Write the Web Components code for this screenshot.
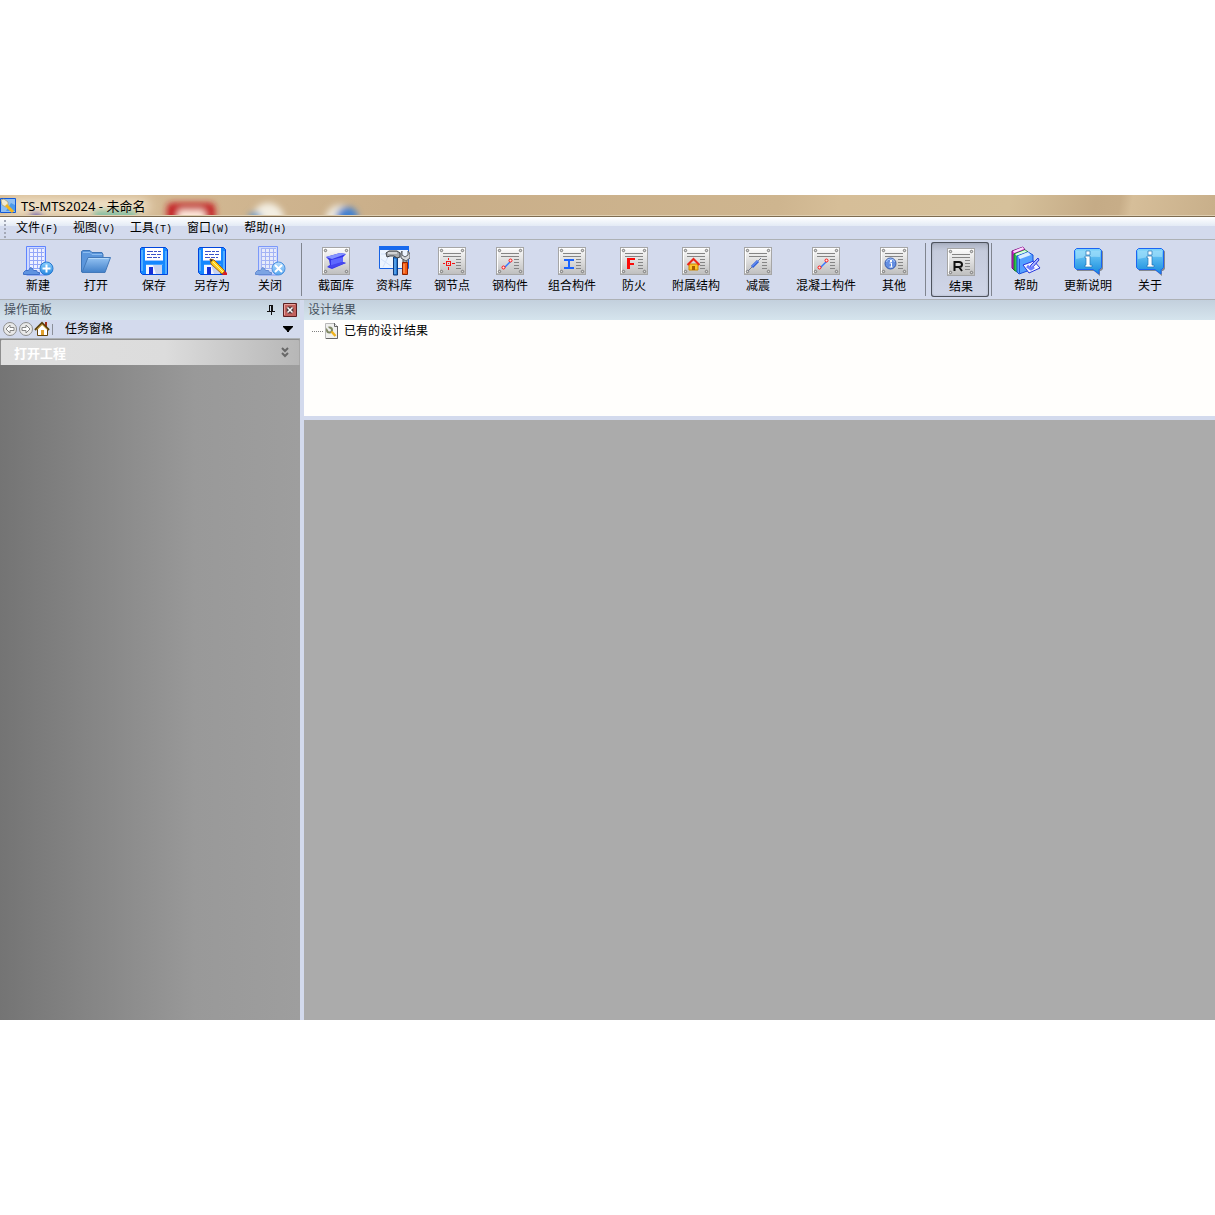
<!DOCTYPE html>
<html lang="zh-CN">
<head>
<meta charset="utf-8">
<title>TS-MTS2024 - 未命名</title>
<style>
  body {
    margin: 0;
    min-height: 100vh;
    box-sizing: border-box;
    padding: 195px 0;
    display: flex;
    flex-direction: column;
    background: #fff;
    font: 12px/16px "Noto Sans CJK SC", "Liberation Sans", sans-serif;
    color: #000;
    --face: #d3daed;
    --edge: #adb1b5;
  }
</style>
</head>
<body>
<mts-window>
  <mts-title slot="title">TS-MTS2024 - 未命名</mts-title>
  <mts-menubar slot="menu">
    <mts-menu key="F">文件</mts-menu>
    <mts-menu key="V">视图</mts-menu>
    <mts-menu key="T">工具</mts-menu>
    <mts-menu key="W">窗口</mts-menu>
    <mts-menu key="H">帮助</mts-menu>
  </mts-menubar>
  <mts-toolbar slot="tools">
    <mts-tool icon="new">新建</mts-tool>
    <mts-tool icon="open">打开</mts-tool>
    <mts-tool icon="save">保存</mts-tool>
    <mts-tool icon="saveas">另存为</mts-tool>
    <mts-tool icon="close">关闭</mts-tool>
    <mts-separator></mts-separator>
    <mts-tool icon="section">截面库</mts-tool>
    <mts-tool icon="data">资料库</mts-tool>
    <mts-tool icon="node">钢节点</mts-tool>
    <mts-tool icon="member">钢构件</mts-tool>
    <mts-tool icon="composite">组合构件</mts-tool>
    <mts-tool icon="fire">防火</mts-tool>
    <mts-tool icon="house">附属结构</mts-tool>
    <mts-tool icon="damper">减震</mts-tool>
    <mts-tool icon="concrete">混凝土构件</mts-tool>
    <mts-tool icon="other">其他</mts-tool>
    <mts-separator></mts-separator>
    <mts-tool icon="result" pressed>结果</mts-tool>
    <mts-separator></mts-separator>
    <mts-tool icon="books">帮助</mts-tool>
    <mts-tool icon="info">更新说明</mts-tool>
    <mts-tool icon="info">关于</mts-tool>
  </mts-toolbar>
  <mts-taskpane slot="side" caption="操作面板" heading="任务窗格">
    <mts-taskgroup>打开工程</mts-taskgroup>
  </mts-taskpane>
  <mts-results slot="main" caption="设计结果">
    <mts-treeitem>已有的设计结果</mts-treeitem>
  </mts-results>
</mts-window>

<script>
const building = `
  <path d="M4.500 1.500h19V30h-19z" fill="#cfdaff" stroke="#5f84ff"/>
  <path d="M7 3h15v22H7z" fill="#eef1ff"/>
  <path d="M7 3.500h15M7 7.500h15M7 11.500h15M7 15.500h15M7 19.500h15M7 23.500h15M7.500 3v21M11.500 3v21M15.500 3v21M19.500 3v21" stroke="#94a7f8" shape-rendering="crispEdges"/>
  <path d="M1.500 29.500v-2l2-2h3l2-3 2 1 1 2h3l1 2h2v2z" fill="#5f93e0" stroke="#3e70c8"/>`;

const gradient = (a, b) => `<defs><linearGradient id="g" x1="0" y1="0" x2="0" y2="1"><stop offset="0" stop-color="${a}"/><stop offset="1" stop-color="${b}"/></linearGradient></defs>`;

const blank = gradient('#fdfdfd', '#bebebe') + `
  <rect x="2.500" y="2.500" width="27" height="27" fill="url(#g)" stroke="#a6a6a6"/>
  <path d="M3.500 28V3.500H28" fill="none" stroke="#fff"/>
  <g fill="#ddd" stroke="#777"><circle cx="5.500" cy="5.500" r="1.200"/><circle cx="26.500" cy="5.500" r="1.200"/><circle cx="5.500" cy="26.500" r="1.200"/><circle cx="26.500" cy="26.500" r="1.200"/></g>`;

const plate = art => blank + `
  <path d="M7 8.500h18M7 11.500h18M20 14.500h5M20 17.500h5M20 20.500h5M20 23.500h5" stroke="#858585" shape-rendering="crispEdges"/>` + art;

const disk = `
  <path d="M2.500 3.500l1-1h24l2 2v25h-25l-2-2z" fill="#1587ff" stroke="#0044dc"/>
  <path d="M4 5v21M28 6v23" stroke="#66bcff" stroke-width="1.500"/>
  <path d="M7 3h18v13H7z" fill="#fff"/><path d="M7 15.500h18" stroke="#9cc4ff"/>
  <path d="M9 6.500h6m1 0h3m1 0h3M9 9.500h3m1 0h5m1 0h4M9 12.500h5m1 0h4m1 0h2" stroke="#3c52c8" shape-rendering="crispEdges"/>
  <path d="M8 20h16v9H8z" fill="#f4f7ff"/><path d="M15 20h9v9h-6z" fill="#c7d2ef"/>
  <path d="M11 22h4v7h-4z" fill="#1630d8"/><path d="M8 19.500h17" stroke="#45a2ff"/>`;

const strut = `<path d="M10 23l7-7" stroke="#3478ff" stroke-width="1.500"/><g fill="#ffe6e6" stroke="#f11" stroke-width="1"><circle cx="9.500" cy="22.500" r="1.500"/><circle cx="16.500" cy="15.500" r="1.500"/></g>`;

const ICONS = {
  new: [32, 32, building + gradient('#8ad0ff', '#2386df') + `
    <circle cx="24.500" cy="23.500" r="6.500" fill="url(#g)" stroke="#2878cf"/><path d="M24.500 19.500v8M20.500 23.500h8" stroke="#fff" stroke-width="2"/>`],
  close: [32, 32, `<g opacity=".75">${building}</g>` + gradient('#bce1ff', '#54a5ee') + `
    <circle cx="24.500" cy="23.500" r="6.500" fill="url(#g)" stroke="#4b91df"/><path d="M21 20l7 7M28 20l-7 7" stroke="#fff" stroke-width="2"/>`],
  open: [32, 32, gradient('#94c3f3', '#4180c9') + `
    <path d="M1.500 27V6.500l1.500-1h7l2 2h10l1 2V14" fill="#5b96dc" stroke="#3e76b8"/>
    <path d="M3 7.500h7l2 2h10" fill="none" stroke="#8cbdf0"/>
    <path d="M2 27.500L8 12.500h22.500L25 27.500z" fill="url(#g)" stroke="#4379ba"/>
    <path d="M8.500 13.500h20" stroke="#b4d9fb"/>`],
  save: [32, 32, disk],
  saveas: [32, 32, disk + `
    <path d="M14 14l1 5 11 10 3-3L18 15z" fill="#ffd21c" stroke="#a85f14"/>
    <path d="M17 17l10 10" stroke="#fff19a"/><path d="M14 14l1 3 2-2z" fill="#333"/>
    <path d="M26 30l3-4 2 2v2z" fill="#d81a22"/>`],
  section: [32, 32, blank + `
    <path d="M6 12l14-4 6 1-3 3v5l3 1-14 6-5-2 3-2-1-5z" fill="#3334e9"/>
    <path d="M6 12l14-4 6 1-14 5z" fill="#8494ff"/><path d="M11 15l12-3v5l-12 4z" fill="#5e68ff"/><path d="M8 21l14-4 4 1-14 5z" fill="#4547ef"/>`],
  data: [32, 32, `
    <path d="M1.500 2.500h29v21h-29z" fill="#edf5ff" stroke="#1662e4"/><path d="M1 1h30v4H1z" fill="#1769ee"/>
    <path d="M3 9h18M3 14l10 7M5 22l8-16M16 22l6-12" stroke="#d2e2fa" fill="none"/>
    <path d="M15.500 12h4v18h-4z" fill="#2478cf" stroke="#123b7a"/><path d="M17 14v15" stroke="#7cc2ff"/>
    <path d="M8 8l3-2h8l3 2v4l-3 1-3-2h-4l-3 1z" fill="#a5a8ab" stroke="#404345"/><path d="M10 8h9" stroke="#fff"/>
    <path d="M25 13h4v5h-4z" fill="#aaa" stroke="#444"/><path d="M24 6v4l3 2 3-2V6l2 3v4l-4 3-5-3V8z" fill="#d5d8db" stroke="#575b60"/>
    <path d="M24.500 17.500h5v12h-5z" fill="#f35a13" stroke="#8d2200"/><path d="M26 19v9" stroke="#ffad73"/>`],
  node: [32, 32, plate(`<g stroke="#f21313" fill="none" shape-rendering="crispEdges"><path d="M10.500 16.500h4v4h-4zM7 18.500h2m3 0h1m3 0h3M12.500 13v2m0 3v1m0 3v3"/></g>`)],
  member: [32, 32, plate(strut)],
  concrete: [32, 32, plate(strut)],
  composite: [32, 32, plate(`<path d="M8 14h10v2h-4v6h4v2H8v-2h4v-6H8z" fill="#1b64ff"/>`)],
  fire: [32, 32, plate(`<path d="M9 13h8v2h-5v3h4v2h-4v4H9z" fill="#fb0b08"/>`)],
  house: [32, 32, plate(`<path d="M9 19h9v6H9z" fill="#ffc52a" stroke="#c98600"/><path d="M12 21h3v4h-3z" fill="#a85f00"/><path d="M7.500 20l6-6 6 6" fill="none" stroke="#ed2519" stroke-width="2"/>`)],
  damper: [32, 32, plate(`<path d="M6 26l13-13" stroke="#71798f"/><path d="M10 22l6-6" stroke="#2e5fd9" stroke-width="3"/><path d="M10 21.500l6-6" stroke="#8aabff"/>`)],
  other: [32, 32, plate(`<circle cx="12.500" cy="18.500" r="5.500" fill="#648fe2" stroke="#3559a9"/><path d="M8.500 17a4 3 0 0 1 8 0" fill="none" stroke="#a9c9ff"/><path d="M11.500 18h2v4m-2 0h3" stroke="#fff" fill="none"/><path d="M12 15h2v2h-2z" fill="#fff"/>`)],
  result: [32, 32, plate(`<path d="M9.500 25v-9h4.500q3 0 3 2.500t-3 2.500H10m4 0l3 4" fill="none" stroke="#111" stroke-width="2"/>`)],
  books: [32, 32, `
    <path d="M2 6l11-4 2 3v17L4 25l-2-2z" fill="#cf21c8" stroke="#7b087d"/><path d="M3 6l10-4 1 2-10 4z" fill="#ffd8ff"/>
    <path d="M4 9l11-4 3 2v17L7 27l-3-2z" fill="#32c24a" stroke="#087e1f"/><path d="M5 9l10-4 2 2-10 4z" fill="#d8ffdc"/>
    <path d="M7 11l11-4 5 3v14L9 29l-2-2z" fill="#54a0ff" stroke="#174edb"/><path d="M8 11l10-4 3 3-11 4z" fill="#d8edff"/><path d="M9.500 14v14" stroke="#2459d0"/>
    <path d="M13 20l11-4 6 7-11 5z" fill="#f4f6ff" stroke="#2434dd"/><path d="M19 24l2-4 7-7 1 2-6 7z" fill="#aab6ff" stroke="#2434dd"/><path d="M17 21l4 3 3-2" fill="none" stroke="#6e7eff" stroke-width="3"/>`],
  info: [32, 32, gradient('#7fd4fa', '#168bdd') + `
    <path d="M5 4.500h24l2 2V24l-2 2h-1v5l-6-5H5z" fill="#84898f"/>
    <path d="M4.500 3.500h23l2 2v17l-2 2H27V29l-6-4.500H4.500l-2-2v-17z" fill="url(#g)" stroke="#1b64f3"/>
    <path d="M4 14V5.500h24V12q-12-1-24 2z" fill="#a9e3fb" opacity=".6"/>
    <path d="M14 6h4v4h-4zM13 11h5v9h2v2h-7v-2h1v-7h-1z" fill="#fff" stroke="#2372b4" stroke-width=".7"/>`],
  app: [16, 16, `
    <path d="M.5.5h15v14H.5z" fill="#8fbff2" stroke="#1159d9"/><path d="M6 13l5-8 4 2v6z" fill="#4d9ae9"/>
    <path d="M1 2l3-1 4 3v3L6 9 2 7z" fill="#f2ead0" stroke="#a89a70" stroke-width=".7"/><path d="M6 7l7 7" stroke="#f4b51c" stroke-width="3"/>`],
  pin: [8, 10, `<path d="M2 0h4v6H2zM0 6h8v1H0zM4 7h1v3H4z" fill="#111"/><path d="M3 1h1v5H3z" fill="#d0dce7"/>`],
  cross: [14, 14, `
    <path d="M.5.5h13v13H.5z" fill="#c2645e" stroke="#5c2020"/><path d="M1.500 12V1.500H12" fill="none" stroke="#e6a39c"/>
    <path d="M4.500 4.500l5 5M9.500 4.500l-5 5" stroke="#4f3a3a" stroke-width="4"/><path d="M4.500 4.500l5 5M9.500 4.500l-5 5" stroke="#fff" stroke-width="1.500"/>`],
  back: [16, 16, `<circle cx="8" cy="8" r="6.500" fill="#e9e9e9" stroke="#8e8e8e"/><path d="M4 8l4-4v2.500h4v3H8V12z" fill="#fff" stroke="#858585"/>`],
  forward: [16, 16, `<circle cx="8" cy="8" r="6.500" fill="#e9e9e9" stroke="#8e8e8e"/><path d="M12 8L8 4v2.500H4v3h4V12z" fill="#fff" stroke="#858585"/>`],
  home: [16, 16, `
    <path d="M11 1h2v6h-2z" fill="#a42c17"/><path d="M3.500 8v6.500h10V8l-5-5z" fill="#fff" stroke="#62430b"/>
    <path d="M1 9l7-7 7 7" fill="none" stroke="#59400e" stroke-width="2"/><path d="M3 8.500l5-5 5 5" fill="none" stroke="#f5c652"/>
    <path d="M7 9h3v5H7z" fill="#e2a12d"/>`],
  down: [10, 6, `<path d="M0 0h10v1L6 5v1H4V5L0 1z" fill="#000"/>`],
  chevrons: [8, 12, `<path d="M1 1l3 3 3-3M1 6l3 3 3-3" fill="none" stroke="#686868" stroke-width="2"/>`],
  page: [14, 16, `
    <path d="M.5.5h9l3 3v12H.5z" fill="#f0f0ee" stroke="#b8b8b8"/><path d="M9.500 0v3.500H13M12.500 4v11.500H1" fill="none" stroke="#666"/>
    <circle cx="4.500" cy="7" r="2.500" fill="none" stroke="#7f8863" stroke-width="2"/><path d="M2 4l2 3" stroke="#f0f0ee" stroke-width="2"/><path d="M6.500 8.500l4 4.500" stroke="#f0b31d" stroke-width="2.500"/>`]
};

function define(name, render) {
  customElements.define(name, class extends HTMLElement {
    connectedCallback() {
      if (this.shadowRoot) return;
      this.attachShadow({ mode: 'open' }).innerHTML = render(this);
    }
  });
}

define('mts-icon', el => {
  const [w, h, art] = ICONS[el.getAttribute('name')];
  return `<style>:host{display:block;flex:none}svg{display:block}</style>
    <svg width="${w}" height="${h}" viewBox="0 0 ${w} ${h}" aria-hidden="true">${art}</svg>`;
});

define('mts-window', () => `
  <style>
    :host{display:flex;flex-direction:column;flex:1;background:var(--face);overflow:hidden}
    main{flex:1;display:flex;gap:4px}
    slot[name=main]::slotted(*){flex:1;min-width:0}
  </style>
  <slot name="title"></slot><slot name="menu"></slot><slot name="tools"></slot>
  <main><slot name="side"></slot><slot name="main"></slot></main>`);

define('mts-title', () => `
  <style>
    :host{display:block}
    header{position:relative;height:22px;box-sizing:border-box;display:flex;align-items:center;gap:5px;overflow:hidden;
      border-bottom:1px solid #7d6b50;
      background:linear-gradient(100deg,#d9bf99 0,#c9ae89 34%,#ceb58f 64%,#d6be98 69%,#d6c19b 83%,#c5ab86 90%,#c7ad88 92%,#d6be99 93%,#c8af8a 100%)}
    header::after{content:"";position:absolute;inset:auto 0 0;height:1px;background:#dfcfb2}
    .glass{position:absolute;inset:0;width:100%;height:100%}
    h1,mts-icon{position:relative}
    h1{margin:0;font:13px/20px "Noto Sans","Noto Sans CJK SC",sans-serif}
  </style>
  <header>
    <svg class="glass" aria-hidden="true">
      <defs><filter id="b" x="-50%" y="-100%" width="200%" height="300%"><feGaussianBlur stdDeviation="3"/></filter>
      <filter id="c" x="-50%" y="-100%" width="200%" height="300%"><feGaussianBlur stdDeviation="7 5"/></filter></defs>
      <rect x="10" y="3" width="138" height="16" fill="#efe0c6" filter="url(#c)"/>
      <g filter="url(#b)">
        <circle cx="36" cy="26" r="7" fill="#3a35b0"/>
        <rect x="94" y="16" width="42" height="16" fill="#82c0a2"/>
        <rect x="167" y="8" width="48" height="26" rx="5" fill="#c41c20"/>
        <rect x="178" y="15" width="27" height="14" rx="3" fill="#ffe9dc"/>
        <circle cx="268" cy="24" r="16" fill="#f3eee2"/>
        <circle cx="255" cy="24" r="7" fill="#6699c6"/>
        <circle cx="340" cy="25" r="15" fill="#efe9dd"/>
        <circle cx="347" cy="23" r="11" fill="#3f80d0"/>
      </g>
    </svg>
    <mts-icon name="app"></mts-icon><h1><slot></slot></h1>
  </header>`);

define('mts-menubar', () => `
  <style>
    :host{display:block}
    nav{height:23px;box-sizing:border-box;display:flex;align-items:center;padding:1px 0 0 4px;
      border-bottom:1px solid var(--edge);background:linear-gradient(#fff 0,#e3eaf5 9px,var(--face) 9px)}
    i{width:2px;height:18px;margin-right:2px;background:repeating-linear-gradient(#a3a8b6 0 2px,transparent 2px 4px)}
  </style>
  <nav><i></i><slot></slot></nav>`);

define('mts-menu', el => `
  <style>
    :host{display:block}
    button{display:block;border:0;background:none;margin:0;padding:0 7px 0 8px;font:inherit;color:inherit;white-space:nowrap}
    span{font:10px/16px "Liberation Mono",monospace}
  </style>
  <button type="button"><slot></slot><span>(${el.getAttribute('key')})</span></button>`);

define('mts-toolbar', () => `
  <style>
    :host{display:block}
    div{height:60px;box-sizing:border-box;display:flex;align-items:center;padding-left:9px;border-bottom:1px solid var(--edge)}
  </style>
  <div role="toolbar"><slot></slot></div>`);

define('mts-separator', () => `
  <style>:host{display:block;flex:none;width:1px;height:53px;margin:0 5px 0 2px;background:#80858f}</style>`);

define('mts-tool', el => `
  <style>
    :host{display:block;flex:none}
    button{display:flex;flex-direction:column;align-items:center;min-width:58px;height:55px;box-sizing:border-box;
      margin:0;border:0;border-radius:3px;padding:3px 9px 0;background:none;font:inherit;color:inherit;white-space:nowrap}
    button[aria-pressed=true]{padding:4px 8px 0 10px;
      background:linear-gradient(#a9afc0,#c5cbdc 9px,#d0d6e8 100%);
      box-shadow:inset 0 0 0 1px #4e535d,inset 0 0 3px #7c8290}
  </style>
  <button type="button"${el.hasAttribute('pressed') ? ' aria-pressed="true"' : ''}>
    <mts-icon name="${el.getAttribute('icon')}"></mts-icon><span><slot></slot></span></button>`);

define('mts-caption', () => `
  <style>
    :host{display:flex;align-items:center;height:20px;box-sizing:border-box;padding:0 3px 0 4px;gap:8px;
      background:linear-gradient(#c3d0dd,#d5e4ed);color:#46515d}
    h2{margin:0;padding-bottom:2px;flex:1;font:inherit}
  </style>
  <h2><slot></slot></h2><slot name="actions"></slot>`);

define('mts-taskpane', el => `
  <style>
    :host{display:flex;flex-direction:column;flex:none;width:300px}
    button{display:block;border:0;padding:0;margin:0;background:none}
    nav{display:flex;align-items:center;height:18px;padding:0 7px 0 2px;border-bottom:1px solid var(--edge)}
    i{width:1px;height:11px;margin:0 12px 0 2px;background:#8b8f99}
    h3{margin:0;padding-bottom:2px;flex:1;font:inherit}
    section{flex:1;background:linear-gradient(90deg,#747474,#999 65%,#9e9e9e)}
  </style>
  <mts-caption>${el.getAttribute('caption')}
    <button slot="actions" type="button" aria-label="自动隐藏"><mts-icon name="pin"></mts-icon></button>
    <button slot="actions" type="button" aria-label="关闭"><mts-icon name="cross"></mts-icon></button>
  </mts-caption>
  <nav>
    <button type="button" aria-label="后退"><mts-icon name="back"></mts-icon></button>
    <button type="button" aria-label="前进"><mts-icon name="forward"></mts-icon></button>
    <button type="button" aria-label="主页"><mts-icon name="home"></mts-icon></button>
    <i></i><h3>${el.getAttribute('heading')}</h3>
    <button type="button" aria-label="选择窗格"><mts-icon name="down"></mts-icon></button>
  </nav>
  <section><slot></slot></section>`);

define('mts-taskgroup', () => `
  <style>
    :host{display:block}
    button{display:flex;align-items:center;justify-content:space-between;width:100%;height:26px;box-sizing:border-box;
      margin:0;padding:0 10px 0 13px;border:1px solid #8e8e8e;border-right-color:#a8a8a8;border-bottom:0;border-radius:2px 2px 0 0;
      background:linear-gradient(90deg,#dfdfdf 0,#dcdcdc 55%,#b7b7b7 100%);font:inherit;font-size:13px;font-weight:bold;color:#fff}
  </style>
  <button type="button" aria-expanded="false"><span><slot></slot></span><mts-icon name="chevrons"></mts-icon></button>`);

define('mts-results', el => `
  <style>
    :host{display:flex;flex-direction:column}
    .tree{height:96px;box-sizing:border-box;padding:2px 8px;background:#fffefc}
    .client{flex:1;margin-top:4px;background:#ababab}
  </style>
  <mts-caption>${el.getAttribute('caption')}</mts-caption>
  <div class="tree" role="tree"><slot></slot></div>
  <div class="client"></div>`);

define('mts-treeitem', () => `
  <style>
    :host{display:flex;align-items:center}
    i{width:11px;border-top:1px dotted #808080;margin-right:2px}
    span{margin-left:5px;padding-bottom:2px}
  </style>
  <i></i><mts-icon name="page"></mts-icon><span role="treeitem"><slot></slot></span>`);
</script>
</body>
</html>
